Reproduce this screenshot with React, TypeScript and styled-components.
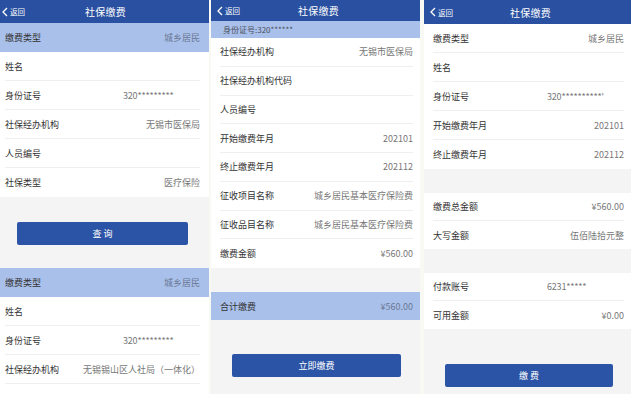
import React from 'react';
import styled, { createGlobalStyle } from 'styled-components';

const GlobalStyle = createGlobalStyle`
  html, body {
    margin: 0;
    padding: 0;
    background: #f9f9f4;
  }
  body {
    font-family: "Noto Sans CJK SC", "Noto Sans", sans-serif;
  }
`;

const Screens = styled.div`
  display: flex;
  width: 631px;
  height: 394px;
  overflow: hidden;
`;

const Phone = styled.div<{ $w: number; $ml: number; $pl: number; $pr: number }>`
  --pl: ${p => p.$pl}px;
  --pr: ${p => p.$pr}px;
  width: ${p => p.$w}px;
  margin-left: ${p => p.$ml}px;
  height: 394px;
  flex-shrink: 0;
  background: #f4f4f4;
  overflow: hidden;
  display: flex;
  flex-direction: column;
`;

const NavBar = styled.div<{ $h: number }>`
  height: ${p => p.$h}px;
  flex-shrink: 0;
  background: #2a51a1;
  color: #fff;
  display: grid;
  grid-template-columns: 1fr auto 1fr;
  align-items: center;
  padding-left: calc(var(--pl) - 3px);
`;

const Back = styled.div`
  display: flex;
  align-items: center;
  gap: 2px;
  font-size: 7.5px;
`;

const Title = styled.div`
  font-size: 10px;
  letter-spacing: 0.3px;
`;

const Sticky = styled.div`
  height: 17px;
  flex-shrink: 0;
  background: #a9c0ea;
  color: #4a4f5c;
  font-size: 8px;
  display: flex;
  align-items: center;
  padding-left: calc(var(--pl) + 3px);
`;

const Group = styled.div<{ $mt?: number; $grow?: boolean }>`
  background: #fff;
  flex-shrink: 0;
  margin-top: ${p => p.$mt ?? 0}px;
  padding: 0 var(--pr) 0 var(--pl);
  ${p => (p.$grow ? 'flex: 1;' : '')}
`;

const Row = styled.div<{ $h: number }>`
  height: ${p => p.$h}px;
  box-sizing: border-box;
  display: flex;
  align-items: center;
  justify-content: space-between;
  font-size: 9px;
  border-bottom: 1px solid #efefef;
  &:last-child {
    border-bottom: none;
  }
`;

const HighlightRow = styled(Row)<{ $mt?: number }>`
  flex-shrink: 0;
  margin-top: ${p => p.$mt ?? 0}px;
  background: #a9c0ea;
  padding: 0 var(--pr) 0 var(--pl);
  border-bottom: none;
`;

const Label = styled.span`
  color: #333;
`;

const Value = styled.span<{ $dim?: boolean }>`
  color: ${p => (p.$dim ? '#6a7894' : '#777')};
`;

const ColValue = styled.span`
  color: #777;
  width: 77px;
  text-align: left;
  letter-spacing: -0.2px;
`;

const ActionButton = styled.button<{ $mt: number; $ml: number; $w: number }>`
  flex-shrink: 0;
  margin: ${p => p.$mt}px 0 0 ${p => p.$ml}px;
  width: ${p => p.$w}px;
  height: 23px;
  border: none;
  border-radius: 2px;
  background: #2c54a6;
  color: #fff;
  font-family: inherit;
  font-size: 9px;
  padding: 0;
`;

const Chevron = () => (
  <svg width="6" height="10" viewBox="0 0 6 10">
    <polyline points="5,1 1,5 5,9" fill="none" stroke="#fff" strokeWidth="1.3" />
  </svg>
);

const Header: React.FC<{ h: number }> = ({ h }) => (
  <NavBar $h={h}>
    <Back>
      <Chevron />
      返回
    </Back>
    <Title>社保缴费</Title>
    <span />
  </NavBar>
);

type Item = [string, string?, boolean?];

const List: React.FC<{ items: Item[]; h: number; mt?: number; grow?: boolean }> = ({ items, h, mt, grow }) => (
  <Group $mt={mt} $grow={grow}>
    {items.map(([label, value, col], i) => (
      <Row key={i} $h={h}>
        <Label>{label}</Label>
        {col ? <ColValue>{value}</ColValue> : <Value>{value}</Value>}
      </Row>
    ))}
  </Group>
);

const App: React.FC = () => (
  <>
    <GlobalStyle />
    <Screens>
      <Phone $w={209} $ml={0} $pl={5} $pr={9}>
        <Header h={23} />
        <HighlightRow $h={29}>
          <Label>缴费类型</Label>
          <Value $dim>城乡居民</Value>
        </HighlightRow>
        <List
          h={29}
          items={[
            ['姓名'],
            ['身份证号', '320*********', true],
            ['社保经办机构', '无锡市医保局'],
            ['人员编号'],
            ['社保类型', '医疗保险'],
          ]}
        />
        <ActionButton $mt={25} $ml={17} $w={171}>查 询</ActionButton>
        <HighlightRow $h={29} $mt={23}>
          <Label>缴费类型</Label>
          <Value $dim>城乡居民</Value>
        </HighlightRow>
        <List
          h={29}
          grow
          items={[
            ['姓名'],
            ['身份证号', '320*********', true],
            ['社保经办机构', '无锡锡山区人社局（一体化）'],
            [''],
          ]}
        />
      </Phone>

      <Phone $w={209} $ml={2} $pl={9} $pr={7}>
        <Header h={21} />
        <Sticky>身份证号:320******</Sticky>
        <List
          h={28.75}
          items={[
            ['社保经办机构', '无锡市医保局'],
            ['社保经办机构代码'],
            ['人员编号'],
            ['开始缴费年月', '202101'],
            ['终止缴费年月', '202112'],
            ['征收项目名称', '城乡居民基本医疗保险费'],
            ['征收品目名称', '城乡居民基本医疗保险费'],
            ['缴费金额', '¥560.00'],
          ]}
        />
        <HighlightRow $h={28} $mt={24}>
          <Label>合计缴费</Label>
          <Value $dim>¥560.00</Value>
        </HighlightRow>
        <ActionButton $mt={34} $ml={21} $w={169}>立即缴费</ActionButton>
      </Phone>

      <Phone $w={207} $ml={4} $pl={9} $pr={7}>
        <Header h={24} />
        <List
          h={29}
          items={[
            ['缴费类型', '城乡居民'],
            ['姓名'],
            ['身份证号', "320**********'", true],
            ['开始缴费年月', '202101'],
            ['终止缴费年月', '202112'],
          ]}
        />
        <List
          h={28}
          mt={24}
          items={[
            ['缴费总金额', '¥560.00'],
            ['大写金额', '伍佰陆拾元整'],
          ]}
        />
        <List
          h={28}
          mt={24}
          items={[
            ['付款账号', '6231*****', true],
            ['可用金额', '¥0.00'],
          ]}
        />
        <ActionButton $mt={35} $ml={21} $w={168}>缴 费</ActionButton>
      </Phone>
    </Screens>
  </>
);

export default App;
